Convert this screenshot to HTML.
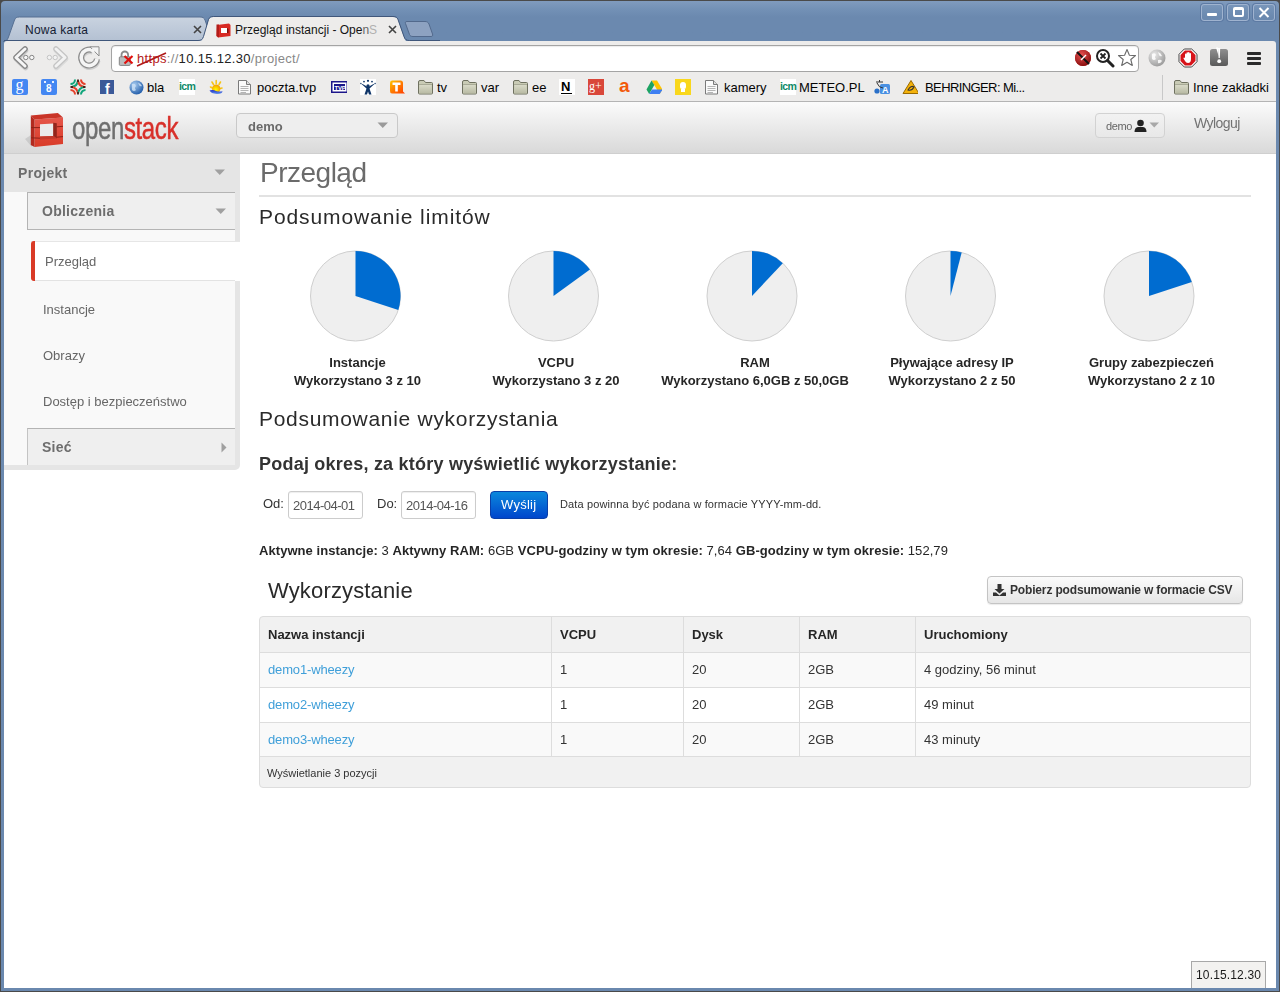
<!DOCTYPE html>
<html><head><meta charset="utf-8">
<style>
*{box-sizing:border-box;margin:0;padding:0}
html,body{width:1280px;height:992px;overflow:hidden;background:#4a4a4a;font-family:"Liberation Sans",sans-serif}
.a{position:absolute}
.t{position:absolute;white-space:nowrap;line-height:1}
#frame{position:absolute;left:1px;top:1px;width:1278px;height:990px;background:linear-gradient(#809bbe 0,#7391b6 8px,#6b89af 16px,#6a88ae 100%);border-radius:4px 4px 0 0}
#toolbar{position:absolute;left:4px;top:41px;width:1272px;height:61px;background:#edeceb;border-radius:3px 3px 0 0}
#page{position:absolute;left:4px;top:102px;width:1272px;height:886px;background:#fff;overflow:hidden}
.wb{position:absolute;top:4px;width:22px;height:17px;border:1px solid #9fb3cf;border-radius:3px;box-shadow:0 0 0 1px #5d7aa3}
.bm{position:absolute;top:79px;width:16px;height:16px}
.bmt{position:absolute;top:81px;font-size:13px;line-height:1;color:#050505;white-space:nowrap}
</style></head><body>
<div id="frame"></div>
<!-- window buttons -->
<div class="wb" style="left:1201px"><div class="a" style="left:5px;top:8px;width:10px;height:3px;background:#fff;border-radius:1px"></div></div>
<div class="wb" style="left:1227px"><div class="a" style="left:5px;top:2px;width:11px;height:10px;border:2px solid #fff;border-top-width:3px;border-radius:2px"></div></div>
<div class="wb" style="left:1253px"><svg class="a" style="left:4px;top:2px" width="12" height="11"><path d="M1.5 1L10.5 10M10.5 1L1.5 10" stroke="#fff" stroke-width="2"/></svg></div>
<!-- inactive tab -->
<svg class="a" style="left:0;top:0" width="440" height="44">
<defs><linearGradient id="gi" x1="0" y1="0" x2="0" y2="1"><stop offset="0" stop-color="#c9d3e0"/><stop offset="1" stop-color="#b3c0d2"/></linearGradient></defs>
<path d="M3 41.5 C6 41.5 7.5 40 8.5 37 L14.5 20 C15.5 17.8 16.5 17 19.5 17 L200 17 C203 17 204 17.8 205 20 L211 37 C212 40 213 41.5 216 41.5 Z" fill="url(#gi)"/>
<path d="M3 41.5 C6 41.5 7.5 40 8.5 37 L14.5 20 C15.5 17.8 16.5 17 19.5 17 L200 17 C203 17 204 17.8 205 20 L211 37 C212 40 213 41.5 216 41.5" fill="none" stroke="#566f92" stroke-width="1"/>
<path d="M407 21.5 L425 21.5 C427 21.5 428 22.2 429 24 L432.5 34 C433 35.5 432.5 36.5 431 36.5 L413 36.5 C411 36.5 410 35.8 409.5 34.5 L405.5 23.5 C405 22.2 405.5 21.5 407 21.5 Z" fill="#8da2c1" stroke="#52698c" stroke-width="1"/>
</svg>
<div class="t" style="left:25px;top:24px;font-size:12px;color:#141c33;letter-spacing:0.25px">Nowa karta</div>
<svg class="a" style="left:193px;top:25px" width="9" height="9"><path d="M1 1L8 8M8 1L1 8" stroke="#444" stroke-width="1.6"/></svg>
<div id="toolbar"></div>
<!-- active tab -->
<svg class="a" style="left:0;top:0" width="440" height="44">
<path d="M198 42 C201 42 202.5 40.5 203.5 37.5 L208.5 20 C209.5 17.8 210.5 17 213.5 17 L393 17 C396 17 397 17.8 398 20 L404 37.5 C405 40.5 406.5 42 409.5 42 Z" fill="#edeceb"/>
<path d="M4 40.5 L198 40.5 C201 40.5 202.5 39.5 203.5 36.5 L208.5 19.5 C209.5 17.3 210.5 16.5 213.5 16.5 L393 16.5 C396 16.5 397 17.3 398 19.5 L404 36.5 C405 39.5 406.5 40.5 409.5 40.5 L1276 40.5" fill="none" stroke="#40577b" stroke-width="1"/>
</svg>
<svg class="a" style="left:215px;top:22px" width="17" height="16"><path d="M2 3 L14 1.5 L15.5 3 L15.5 14 L3 15.5 L1.5 14 Z" fill="#d82a24"/><path d="M1.5 2.5 L4 2.5 L4 15.5 L1.5 14Z" fill="#b21d18"/><rect x="6" y="6" width="6" height="5" fill="#fff"/><path d="M12 6 L13.5 7 L13.5 11 L12 11Z" fill="#7a1410"/></svg>
<div class="t" style="left:235px;top:24px;font-size:12px;color:#141414;letter-spacing:0px">Przegląd instancji - Ope<span style="color:#666">n</span><span style="color:#b0b0b0">S</span></div>
<svg class="a" style="left:388px;top:25px" width="9" height="9"><path d="M1 1L8 8M8 1L1 8" stroke="#444" stroke-width="1.6"/></svg>

<!-- nav buttons -->
<svg class="a" style="left:8px;top:45px" width="30" height="26">
 <path d="M17 4 L8 12.5 L17 21" fill="none" stroke="#c8c8c8" stroke-width="5.5" stroke-linecap="round" stroke-linejoin="round" transform="translate(0.5,1.5)"/>
 <path d="M17 4 L8 12.5 L17 21" fill="none" stroke="#858585" stroke-width="5.5" stroke-linecap="round" stroke-linejoin="round"/>
 <path d="M17 4 L8 12.5 L17 21" fill="none" stroke="#f6f6f6" stroke-width="3" stroke-linecap="round" stroke-linejoin="round"/>
 <circle cx="17.8" cy="12.5" r="2.2" fill="#f6f6f6" stroke="#858585" stroke-width="1"/>
 <circle cx="23.8" cy="12.5" r="2.2" fill="#f6f6f6" stroke="#858585" stroke-width="1"/>
</svg>
<svg class="a" style="left:42px;top:45px" width="30" height="26">
 <path d="M14 4 L23 12.5 L14 21" fill="none" stroke="#dadada" stroke-width="5.5" stroke-linecap="round" stroke-linejoin="round" transform="translate(0.5,1.5)"/>
 <path d="M14 4 L23 12.5 L14 21" fill="none" stroke="#c4c4c4" stroke-width="5.5" stroke-linecap="round" stroke-linejoin="round"/>
 <path d="M14 4 L23 12.5 L14 21" fill="none" stroke="#f2f2f2" stroke-width="3" stroke-linecap="round" stroke-linejoin="round"/>
 <circle cx="7.4" cy="12.5" r="2.2" fill="#f2f2f2" stroke="#c4c4c4" stroke-width="1"/>
 <circle cx="13.2" cy="12.5" r="2.2" fill="#f2f2f2" stroke="#c4c4c4" stroke-width="1"/>
</svg>
<svg class="a" style="left:78px;top:45px" width="24" height="26">
 <path d="M19 14 A8 8 0 1 1 14.5 5.3" fill="none" stroke="#cfcfcf" stroke-width="6" transform="translate(0.5,1.5)"/>
 <path d="M19 14 A8 8 0 1 1 14.5 5.3" fill="none" stroke="#8c8c8c" stroke-width="6"/>
 <path d="M19 14 A8 8 0 1 1 14.5 5.3" fill="none" stroke="#f5f5f5" stroke-width="3.6"/>
 <path d="M12 1.8 L21 1.8 L21 11 Z" fill="#f5f5f5" stroke="#8c8c8c" stroke-width="1" stroke-linejoin="round"/>
 <path d="M13.5 4.5 L16 7" stroke="#f5f5f5" stroke-width="3"/>
</svg>
<!-- omnibox -->
<div class="a" style="left:111px;top:45px;width:1028px;height:27px;background:#fff;border:1px solid #a4a4a4;border-radius:4px;box-shadow:inset 0 1px 1px rgba(0,0,0,.08)"></div>
<svg class="a" style="left:117px;top:50px" width="18" height="18">
 <path d="M4.5 7 V4.8 A3.3 3.3 0 0 1 11.1 4.8 V7" fill="none" stroke="#8a8a8a" stroke-width="1.8"/>
 <rect x="2.3" y="6.8" width="11" height="8.6" rx="1" fill="#bdbdbd" stroke="#858585"/>
 <path d="M7.5 6 L15.5 13.5 M15.5 6 L7.5 13.5" stroke="#e0100d" stroke-width="2.2"/>
</svg>
<div class="t" style="left:137px;top:52px;font-size:13px;color:#555;letter-spacing:0.32px"><span style="color:#b51a1a">https</span><span style="color:#888">://</span><span style="color:#222">10.15.12.30</span><span style="color:#888">/project/</span></div>
<svg class="a" style="left:135px;top:50px" width="34" height="18"><path d="M2 16 L31 3" stroke="#b01818" stroke-width="1.6"/></svg>
<!-- omnibox right icons -->
<svg class="a" style="left:1074px;top:49px" width="18" height="18"><circle cx="9" cy="9" r="8" fill="#b51c1c"/><circle cx="9" cy="9" r="8" fill="url(#rg)"/><path d="M3 3 L15 15" stroke="#111" stroke-width="2"/><path d="M7 11 L12 6" stroke="#fff" stroke-width="1.4"/>
<defs><radialGradient id="rg" cx="0.4" cy="0.3" r="0.7"><stop offset="0" stop-color="#e85050"/><stop offset="1" stop-color="#8a0f0f"/></radialGradient></defs></svg>
<svg class="a" style="left:1095px;top:48px" width="20" height="20"><circle cx="8" cy="8" r="6" fill="#fff" stroke="#222" stroke-width="2"/><path d="M12.5 12.5 L18 18" stroke="#222" stroke-width="3" stroke-linecap="round"/><path d="M5.5 5.5 L10.5 10.5 M10.5 5.5 L5.5 10.5" stroke="#222" stroke-width="1.8"/></svg>
<svg class="a" style="left:1117px;top:48px" width="20" height="20"><path d="M10 1.5 L12.4 7.2 L18.5 7.6 L13.8 11.5 L15.3 17.5 L10 14.2 L4.7 17.5 L6.2 11.5 L1.5 7.6 L7.6 7.2 Z" fill="#fff" stroke="#6a6a6a" stroke-width="1.1" stroke-linejoin="round"/></svg>
<!-- extension icons -->
<svg class="a" style="left:1147px;top:48px" width="20" height="20"><circle cx="10" cy="10" r="8.5" fill="url(#gg)"/><path d="M5 6 Q8 4 9 7 Q7 9 9 11 Q7 13 5 11 Z M11 4 Q14 5 15 8 Q13 9 12 7Z M11 12 Q14 11 15 13 Q13 16 11 15Z" fill="#fff" opacity=".85"/>
<defs><radialGradient id="gg" cx="0.35" cy="0.3" r="0.75"><stop offset="0" stop-color="#e8e8e8"/><stop offset="1" stop-color="#9a9a9a"/></radialGradient></defs></svg>
<svg class="a" style="left:1178px;top:48px" width="20" height="20"><path d="M6.3 1 H13.7 L19 6.3 V13.7 L13.7 19 H6.3 L1 13.7 V6.3 Z" fill="#fff" stroke="#444" stroke-width="1"/><path d="M6.9 2.5 H13.1 L17.5 6.9 V13.1 L13.1 17.5 H6.9 L2.5 13.1 V6.9 Z" fill="#d7141a"/><path d="M7 9 V6.5 Q7 5.6 7.8 5.6 Q8.5 5.6 8.5 6.5 V5 Q8.5 4.2 9.3 4.2 Q10 4.2 10 5 V4.7 Q10 4 10.8 4 Q11.5 4 11.5 4.8 V5.5 Q11.5 4.9 12.2 4.9 Q13 4.9 13 5.7 V11 Q13 15 10 15 Q8 15 7 13 L5.5 10.5 Q5.2 9.6 6 9.4 Q6.6 9.3 7 10Z" fill="#fff"/></svg>
<svg class="a" style="left:1209px;top:47px" width="20" height="20"><rect x="1" y="2" width="18" height="17" rx="2.5" fill="url(#eg)"/><path d="M9 1 L11.2 1 L10.8 11 L9.6 11Z" fill="#fff"/><circle cx="10.2" cy="14.2" r="1.9" fill="#fff"/><path d="M7 0.5 L9 0.5 L9.6 9Z" fill="#fff"/>
<defs><linearGradient id="eg" x1="0" y1="0" x2="0" y2="1"><stop offset="0" stop-color="#8f8f8f"/><stop offset="1" stop-color="#5a5a5a"/></linearGradient></defs></svg>
<div class="a" style="left:1247px;top:52px;width:14px;height:3px;background:#2a2a2a;border-radius:1px"></div>
<div class="a" style="left:1247px;top:57px;width:14px;height:3px;background:#2a2a2a;border-radius:1px"></div>
<div class="a" style="left:1247px;top:62px;width:14px;height:3px;background:#2a2a2a;border-radius:1px"></div>

<!-- bookmarks -->
<div class="a" style="left:4px;top:101px;width:1272px;height:1px;background:#b4b4b4"></div>
<div class="bm" style="left:12px;background:#4487f2;border-radius:2px;overflow:hidden"><div class="t" style="left:3.5px;top:-2.5px;font-size:16px;font-family:'Liberation Serif';color:#fff">g</div></div>
<div class="bm" style="left:41px;background:#4487f2;border-radius:2px"><div class="a" style="left:3px;top:2px;width:2px;height:2px;background:#e8f0ff"></div><div class="a" style="left:11px;top:2px;width:2px;height:2px;background:#e8f0ff"></div><div class="t" style="left:5px;top:5px;font-size:10px;font-weight:bold;color:#fff">8</div></div>
<svg class="bm" style="left:70px" width="16" height="16">
<path d="M0.5 5 A4.5 4.5 0 0 0 5 0.5 M1.5 8 A7.5 7.5 0 0 0 8 1.5" fill="none" stroke="#0fa57a" stroke-width="2"/>
<path d="M11 0.5 A4.5 4.5 0 0 0 15.5 5 M8 1.5 A7.5 7.5 0 0 0 14.5 8" fill="none" stroke="#e5402a" stroke-width="2"/>
<path d="M0.5 11 A4.5 4.5 0 0 1 5 15.5 M1.5 8 A7.5 7.5 0 0 1 8 14.5" fill="none" stroke="#e5402a" stroke-width="2"/>
<path d="M11 15.5 A4.5 4.5 0 0 1 15.5 11 M8 14.5 A7.5 7.5 0 0 1 14.5 8" fill="none" stroke="#0fa57a" stroke-width="2"/>
<path d="M8 0.5 V3 M8 13 V15.5 M0.5 8 H3 M13 8 H15.5" stroke="#45221a" stroke-width="1.8"/>
</svg>
<div class="bm" style="left:100px;top:80px;width:14px;height:14px;background:#3b5998"><div class="t" style="left:5px;top:2px;font-size:14px;font-weight:bold;color:#fff">f</div></div>
<svg class="bm" style="left:129px;top:80px" width="15" height="15"><circle cx="7.5" cy="7.5" r="7" fill="url(#glb)"/><path d="M3 4 Q6 3 7 6 Q5 8 7 10 Q5 12 3 10Z M9 2.5 Q12 3.5 13 6 Q11 7 10 5Z" fill="#cfe3f7" opacity=".8"/><defs><radialGradient id="glb" cx="0.35" cy="0.3" r="0.75"><stop offset="0" stop-color="#a9cdf0"/><stop offset="1" stop-color="#1e5aa8"/></radialGradient></defs></svg>
<div class="bmt" style="left:147px">bla</div>
<div class="bm" style="left:179px;background:#fff"><div class="t" style="left:0px;top:2px;font-size:10.5px;font-weight:bold;color:#0e8a68;letter-spacing:-0.6px">icm</div></div>
<svg class="bm" style="left:208px" width="16" height="16">
<defs><radialGradient id="sun" cx="0.45" cy="0.6" r="0.6"><stop offset="0" stop-color="#ffff00"/><stop offset="1" stop-color="#f39a00"/></radialGradient>
<linearGradient id="wav" x1="0" y1="0" x2="0" y2="1"><stop offset="0" stop-color="#1a2fd0"/><stop offset="1" stop-color="#6a9ae8"/></linearGradient></defs>
<path d="M4 3 L5.5 5.5 M8.2 1.5 L8.2 4.5 M12.5 3 L11 5.5 M2.5 8 L4 8.8 M14 9 L12.5 9.5" stroke="#f5c518" stroke-width="1.6" stroke-linecap="round"/>
<circle cx="8.2" cy="9.8" r="4.2" fill="url(#sun)"/>
<path d="M1.5 11.5 Q5 10.5 8 12 Q11 13 14.5 12.3 Q14 15.5 8.5 15 Q3 14.5 1.5 11.5Z" fill="url(#wav)"/>
</svg>
<svg class="bm" style="left:237px" width="15" height="16"><path d="M1.5 1.5 L9.5 1.5 L13.5 5.5 L13.5 15 L1.5 15 Z" fill="#fafafa" stroke="#7a7a7a" stroke-width="1" stroke-linejoin="round"/><path d="M9.5 1.5 L9.5 5.5 L13.5 5.5" fill="#ddd" stroke="#7a7a7a" stroke-width="1"/><path d="M3.5 7.5 H11.5 M3.5 9.5 H11.5 M3.5 11.5 H11.5 M3.5 13.5 H9" stroke="#b4b4b4" stroke-width="1"/></svg>
<div class="bmt" style="left:257px">poczta.tvp</div>
<svg class="bm" style="left:331px;top:81px" width="17" height="12"><rect x="0.75" y="0.75" width="15.5" height="10.5" fill="#fff" stroke="#1c168a" stroke-width="1.5"/><rect x="3" y="3" width="11" height="6" fill="#1c168a"/><text x="3.6" y="8.5" font-size="6" font-weight="bold" fill="#fff" font-family="Liberation Sans" letter-spacing="-0.2">TVP</text></svg>
<svg class="bm" style="left:360px" width="16" height="16"><rect width="16" height="16" fill="#fff"/><circle cx="8" cy="1.8" r="1.1" fill="#0f3568"/><circle cx="4" cy="2.6" r="0.9" fill="#0f3568"/><circle cx="12" cy="2.6" r="0.9" fill="#0f3568"/><circle cx="0.9" cy="4.5" r="0.7" fill="#0f3568"/><circle cx="15.1" cy="4.5" r="0.7" fill="#0f3568"/><path d="M1.5 5 L6.5 9.5 L4.5 15.5 L7 15.5 L8 12.5 L9 15.5 L11.5 15.5 L9.5 9.5 L14.5 5 L13.5 5 L9 7.5 L7 7.5 L2.5 5Z" fill="#0f3568"/><circle cx="8" cy="6.8" r="1.6" fill="#0f3568"/></svg>
<svg class="bm" style="left:389px" width="17" height="16"><defs><linearGradient id="tg" x1="0" y1="0" x2="1" y2="1"><stop offset="0" stop-color="#ffc800"/><stop offset="0.5" stop-color="#ff7a00"/><stop offset="1" stop-color="#ff3a00"/></linearGradient></defs><path d="M3 1.5 L11.5 1.5 Q14 1.5 14 4 L14 12.5 L16 14.5 L3 14.5 Q1 14.5 1 12 L1 4 Q1 1.5 3 1.5Z" fill="url(#tg)"/><path d="M3.5 3.5 H11.5 V6 H8.8 V12.5 H6.2 V6 H3.5Z" fill="#fff"/></svg>
<svg class="bm" style="left:417px" width="17" height="16"><path d="M1.5 3 Q1.5 1.5 3 1.5 L7 1.5 L8.5 3.5 L14.5 3.5 Q15.5 3.5 15.5 4.5 L15.5 14 Q15.5 15 14.5 15 L2.5 15 Q1.5 15 1.5 14 Z" fill="#c9cbb5" stroke="#6f7160" stroke-width="1"/><path d="M2 5.5 L15 5.5" stroke="#a9ab97"/><rect x="2.5" y="6" width="12" height="8.5" fill="url(#fg)"/><defs><linearGradient id="fg" x1="0" y1="0" x2="0" y2="1"><stop offset="0" stop-color="#d9dac8"/><stop offset="1" stop-color="#b8baa3"/></linearGradient></defs></svg>
<div class="bmt" style="left:437px">tv</div>
<svg class="bm" style="left:461px" width="17" height="16"><path d="M1.5 3 Q1.5 1.5 3 1.5 L7 1.5 L8.5 3.5 L14.5 3.5 Q15.5 3.5 15.5 4.5 L15.5 14 Q15.5 15 14.5 15 L2.5 15 Q1.5 15 1.5 14 Z" fill="#c9cbb5" stroke="#6f7160" stroke-width="1"/><path d="M2 5.5 L15 5.5" stroke="#a9ab97"/><rect x="2.5" y="6" width="12" height="8.5" fill="url(#fg)"/><defs><linearGradient id="fg" x1="0" y1="0" x2="0" y2="1"><stop offset="0" stop-color="#d9dac8"/><stop offset="1" stop-color="#b8baa3"/></linearGradient></defs></svg>
<div class="bmt" style="left:481px">var</div>
<svg class="bm" style="left:512px" width="17" height="16"><path d="M1.5 3 Q1.5 1.5 3 1.5 L7 1.5 L8.5 3.5 L14.5 3.5 Q15.5 3.5 15.5 4.5 L15.5 14 Q15.5 15 14.5 15 L2.5 15 Q1.5 15 1.5 14 Z" fill="#c9cbb5" stroke="#6f7160" stroke-width="1"/><path d="M2 5.5 L15 5.5" stroke="#a9ab97"/><rect x="2.5" y="6" width="12" height="8.5" fill="url(#fg)"/><defs><linearGradient id="fg" x1="0" y1="0" x2="0" y2="1"><stop offset="0" stop-color="#d9dac8"/><stop offset="1" stop-color="#b8baa3"/></linearGradient></defs></svg>
<div class="bmt" style="left:532px">ee</div>
<div class="bm" style="left:559px;background:#fff"><div class="t" style="left:2px;top:1px;font-size:13px;font-weight:bold;color:#000">N</div><div class="a" style="left:2px;top:14px;width:11px;height:1px;background:#000"></div></div>
<div class="bm" style="left:588px;background:#d9473a"><div class="t" style="left:1px;top:1px;font-size:12px;color:#fff;font-family:'Liberation Serif'">g+</div></div>
<div class="t" style="left:619px;top:76px;font-size:19px;font-weight:bold;color:#f25a0a">a</div>
<svg class="bm" style="left:646px" width="17" height="16"><path d="M5.5 1.5 L11 1.5 L16.5 10.5 L13.7 15 Z" fill="#ffc400"/><path d="M5.5 1.5 L0.5 10.5 L3.2 15 L8.3 6Z" fill="#1da362"/><path d="M3.2 15 L13.7 15 L16.5 10.5 L6 10.5Z" fill="#3f7ff2"/></svg>
<div class="bm" style="left:675px;background:#f9d71c"><div class="a" style="left:5px;top:3px;width:6px;height:7px;background:#fff;border-radius:3px 3px 2px 2px"></div><div class="a" style="left:6px;top:10px;width:4px;height:3px;background:#fff"></div></div>
<svg class="bm" style="left:704px" width="15" height="16"><path d="M1.5 1.5 L9.5 1.5 L13.5 5.5 L13.5 15 L1.5 15 Z" fill="#fafafa" stroke="#7a7a7a" stroke-width="1" stroke-linejoin="round"/><path d="M9.5 1.5 L9.5 5.5 L13.5 5.5" fill="#ddd" stroke="#7a7a7a" stroke-width="1"/><path d="M3.5 7.5 H11.5 M3.5 9.5 H11.5 M3.5 11.5 H11.5 M3.5 13.5 H9" stroke="#b4b4b4" stroke-width="1"/></svg>
<div class="bmt" style="left:724px">kamery</div>
<div class="bm" style="left:780px;background:#fff"><div class="t" style="left:0px;top:2px;font-size:10.5px;font-weight:bold;color:#0e8a68;letter-spacing:-0.6px">icm</div></div>
<div class="bmt" style="left:799px">METEO.PL</div>
<svg class="bm" style="left:874px" width="17" height="16"><rect x="6" y="5" width="10" height="10" rx="1.5" fill="#4a90e2"/><text x="8" y="14" font-size="9" font-weight="bold" fill="#fff" font-family="Liberation Sans">A</text><path d="M2 3 H9 M5.5 1 V3 M3 4 Q5 9 9 9" stroke="#333" stroke-width="1" fill="none"/><circle cx="3" cy="12" r="2.6" fill="#2a70c8"/></svg>
<svg class="bm" style="left:902px" width="18" height="16"><path d="M9 1.5 L17 14.5 L1 14.5Z" fill="#f4b20a" stroke="#9a6a00" stroke-width="1" stroke-linejoin="round"/><path d="M6 11 Q9 6 12 8 Q10 12 6 11Z" fill="none" stroke="#333" stroke-width="1.1"/></svg>
<div class="bmt" style="left:925px;letter-spacing:-0.6px">BEHRINGER: Mi...</div>
<div class="a" style="left:1162px;top:75px;width:1px;height:25px;background:#c8c8c8"></div>
<svg class="bm" style="left:1173px" width="17" height="16"><path d="M1.5 3 Q1.5 1.5 3 1.5 L7 1.5 L8.5 3.5 L14.5 3.5 Q15.5 3.5 15.5 4.5 L15.5 14 Q15.5 15 14.5 15 L2.5 15 Q1.5 15 1.5 14 Z" fill="#c9cbb5" stroke="#6f7160" stroke-width="1"/><path d="M2 5.5 L15 5.5" stroke="#a9ab97"/><rect x="2.5" y="6" width="12" height="8.5" fill="url(#fg)"/><defs><linearGradient id="fg" x1="0" y1="0" x2="0" y2="1"><stop offset="0" stop-color="#d9dac8"/><stop offset="1" stop-color="#b8baa3"/></linearGradient></defs></svg>
<div class="bmt" style="left:1193px">Inne zakładki</div>

<div style="position:absolute;left:0;top:0;width:1280px;height:992px;will-change:transform">
<!-- PAGE -->
<div class="a" style="left:4px;top:102px;width:1272px;height:886px;background:#fff"></div>
<div class="a" style="left:4px;top:102px;width:1272px;height:51px;background:linear-gradient(#fbfbfb,#d9d9d9)"></div>
<div class="a" style="left:4px;top:153px;width:1272px;height:1px;background:#cfcfcf"></div>
<!-- logo -->
<svg class="a" style="left:24px;top:108px" width="46" height="42">
 <defs><linearGradient id="lf" x1="0" y1="0" x2="0" y2="1"><stop offset="0" stop-color="#e5564a"/><stop offset="1" stop-color="#d93b28"/></linearGradient></defs>
 <path d="M1 31 L7 27 L8 39 Z" fill="#888" opacity=".25"/>
 <path d="M10.5 11.5 L39 9.5 L39 36 L10.5 39 Z" fill="url(#lf)"/>
 <path d="M6.8 7.6 L33.9 5.1 L39 9.5 L10.5 11.5 Z" fill="#c93427"/>
 <path d="M6.8 7.6 L10.5 11.5 L10.5 39 L6.8 37 Z" fill="#b32a1f"/>
 <path d="M16 16.2 L29.7 15.6 L29.7 28 L16 28.6 Z" fill="#ebebeb"/>
 <path d="M29.2 14.8 L32.8 15.2 L32.8 30.5 L29.2 28 Z" fill="#93251b"/>
 <path d="M16 28.6 L29.7 28 L32.8 30.5 L16 31.5 Z" fill="#c33a2c"/>
 <path d="M7 19.6 L16 19.6 M32.8 18.8 L39 18.3 M7 29.8 L16 30.2 M32.8 29.2 L39 28.6" stroke="#8e2016" stroke-width="1"/>
</svg>
<div class="t" style="left:72px;top:112px;font-size:32px;color:#6f6f6f;transform:scaleX(0.75);transform-origin:0 0;letter-spacing:-0.5px;-webkit-text-stroke:0.5px #6f6f6f">open<span style="color:#d8302a;-webkit-text-stroke:0.5px #d8302a">stack</span></div>
<!-- project dropdown -->
<div class="a" style="left:236px;top:113px;width:162px;height:25px;background:#eeeeee;border:1px solid #c9c9c9;border-radius:4px"></div>
<div class="t" style="left:248px;top:120px;font-size:13px;font-weight:bold;color:#6a6a6a">demo</div>
<svg class="a" style="left:377px;top:122px" width="12" height="7"><path d="M0.5 0.5 L11 0.5 L5.75 6Z" fill="#9a9a9a"/></svg>
<!-- user -->
<div class="a" style="left:1095px;top:113px;width:70px;height:25px;background:linear-gradient(#f2f2f2,#e8e8e8);border:1px solid #d2d2d2;border-radius:4px"></div>
<div class="t" style="left:1106px;top:121px;font-size:11px;color:#666;letter-spacing:-0.4px">demo</div>
<svg class="a" style="left:1134px;top:119px" width="14" height="14"><circle cx="6.5" cy="4" r="3.3" fill="#222"/><path d="M0.5 13 Q0.5 8.5 4 8 L9 8 Q12.5 8.5 12.5 13Z" fill="#222"/></svg>
<svg class="a" style="left:1149px;top:122px" width="11" height="7"><path d="M0.5 0.5 L10 0.5 L5.25 5.5Z" fill="#a8a8a8"/></svg>
<div class="t" style="left:1194px;top:116px;font-size:14px;color:#727272;letter-spacing:-0.55px">Wyloguj</div>

<!-- SIDEBAR -->
<div class="a" style="left:4px;top:154px;width:236px;height:316px;background:#e5e5e5;border-radius:0 0 5px 0"></div>
<div class="a" style="left:4px;top:192px;width:231px;height:273px;background:#f9f9f9"></div>
<div class="t" style="left:18px;top:166px;font-size:14px;font-weight:bold;color:#6d6d6d;letter-spacing:0.3px">Projekt</div>
<svg class="a" style="left:214px;top:169px" width="12" height="7"><path d="M0.5 0.5 L11 0.5 L5.75 6Z" fill="#a0a0a0"/></svg>
<div class="a" style="left:27px;top:192px;width:208px;height:38px;background:#efefef;border:1px solid #b4b4b4;border-right:none"></div>
<div class="t" style="left:42px;top:204px;font-size:14px;font-weight:bold;color:#6d6d6d;letter-spacing:0.25px">Obliczenia</div>
<svg class="a" style="left:215px;top:208px" width="12" height="7"><path d="M0.5 0.5 L11 0.5 L5.75 6Z" fill="#a0a0a0"/></svg>
<div class="a" style="left:31px;top:241px;width:209px;height:40px;background:#fff;border-top:1px solid #e6e6e6"></div>
<div class="a" style="left:31px;top:241px;width:4px;height:40px;background:#d93a26;border-radius:3px 0 0 3px"></div>
<div class="t" style="left:45px;top:255px;font-size:13px;color:#666">Przegląd</div>
<div class="a" style="left:35px;top:280px;width:200px;height:1px;background:#e3e3e3"></div>
<div class="t" style="left:43px;top:303px;font-size:13px;color:#666">Instancje</div>
<div class="t" style="left:43px;top:349px;font-size:13px;color:#666">Obrazy</div>
<div class="t" style="left:43px;top:395px;font-size:13px;color:#666">Dostęp i bezpieczeństwo</div>
<div class="a" style="left:27px;top:428px;width:208px;height:37px;background:#efefef;border-top:1px solid #b4b4b4;border-left:1px solid #c4c4c4"></div>
<div class="t" style="left:42px;top:440px;font-size:14px;font-weight:bold;color:#6d6d6d;letter-spacing:0.25px">Sieć</div>
<svg class="a" style="left:221px;top:442px" width="6" height="11"><path d="M0.5 0.5 L5.5 5.5 L0.5 10.5Z" fill="#a0a0a0"/></svg>

<!-- MAIN -->
<div class="t" style="left:260px;top:159px;font-size:28px;color:#6b6b6b;letter-spacing:-0.5px">Przegląd</div>
<div class="a" style="left:259px;top:195px;width:992px;height:2px;background:#e2e2e2"></div>
<div class="t" style="left:259px;top:206px;font-size:21px;color:#2a2a2a;letter-spacing:0.9px">Podsumowanie limitów</div>
<svg class="a" style="left:0;top:0" width="1280" height="400"><circle cx="355.5" cy="296" r="45" fill="#efefef" stroke="#cfcfcf" stroke-width="1"/><path d="M355.5 296 L355.5 251 A45 45 0 0 1 398.30 309.91 Z" fill="#006cd0"/><circle cx="553.5" cy="296" r="45" fill="#efefef" stroke="#cfcfcf" stroke-width="1"/><path d="M553.5 296 L553.5 251 A45 45 0 0 1 589.91 269.55 Z" fill="#006cd0"/><circle cx="752" cy="296" r="45" fill="#efefef" stroke="#cfcfcf" stroke-width="1"/><path d="M752 296 L752 251 A45 45 0 0 1 782.80 263.20 Z" fill="#006cd0"/><circle cx="950.5" cy="296" r="45" fill="#efefef" stroke="#cfcfcf" stroke-width="1"/><path d="M950.5 296 L950.5 251 A45 45 0 0 1 961.69 252.41 Z" fill="#006cd0"/><circle cx="1149" cy="296" r="45" fill="#efefef" stroke="#cfcfcf" stroke-width="1"/><path d="M1149 296 L1149 251 A45 45 0 0 1 1191.80 282.09 Z" fill="#006cd0"/></svg>
<div class="t" style="left:207.5px;width:300px;text-align:center;top:356px;font-size:13px;font-weight:bold;color:#262626">Instancje</div><div class="t" style="left:207.5px;width:300px;text-align:center;top:374px;font-size:13px;font-weight:bold;color:#262626">Wykorzystano 3 z 10</div><div class="t" style="left:406px;width:300px;text-align:center;top:356px;font-size:13px;font-weight:bold;color:#262626">VCPU</div><div class="t" style="left:406px;width:300px;text-align:center;top:374px;font-size:13px;font-weight:bold;color:#262626">Wykorzystano 3 z 20</div><div class="t" style="left:605px;width:300px;text-align:center;top:356px;font-size:13px;font-weight:bold;color:#262626">RAM</div><div class="t" style="left:605px;width:300px;text-align:center;top:374px;font-size:13px;font-weight:bold;color:#262626">Wykorzystano 6,0GB z 50,0GB</div><div class="t" style="left:802px;width:300px;text-align:center;top:356px;font-size:13px;font-weight:bold;color:#262626">Pływające adresy IP</div><div class="t" style="left:802px;width:300px;text-align:center;top:374px;font-size:13px;font-weight:bold;color:#262626">Wykorzystano 2 z 50</div><div class="t" style="left:1001.5px;width:300px;text-align:center;top:356px;font-size:13px;font-weight:bold;color:#262626">Grupy zabezpieczeń</div><div class="t" style="left:1001.5px;width:300px;text-align:center;top:374px;font-size:13px;font-weight:bold;color:#262626">Wykorzystano 2 z 10</div>
<div class="t" style="left:259px;top:408px;font-size:21px;color:#2a2a2a;letter-spacing:0.7px">Podsumowanie wykorzystania</div>
<div class="t" style="left:259px;top:455px;font-size:18px;font-weight:bold;color:#333;letter-spacing:0.22px">Podaj okres, za który wyświetlić wykorzystanie:</div>
<div class="t" style="left:263px;top:497px;font-size:13px;color:#333">Od:</div>
<div class="a" style="left:288px;top:491px;width:75px;height:28px;background:#fff;border:1px solid #cccccc;border-radius:3px;box-shadow:inset 0 1px 1px rgba(0,0,0,.07)"></div>
<div class="t" style="left:293px;top:499px;font-size:13px;color:#555;letter-spacing:-0.5px">2014-04-01</div>
<div class="t" style="left:377px;top:497px;font-size:13px;color:#333">Do:</div>
<div class="a" style="left:401px;top:491px;width:75px;height:28px;background:#fff;border:1px solid #cccccc;border-radius:3px;box-shadow:inset 0 1px 1px rgba(0,0,0,.07)"></div>
<div class="t" style="left:406px;top:499px;font-size:13px;color:#555;letter-spacing:-0.5px">2014-04-16</div>
<div class="a" style="left:490px;top:491px;width:58px;height:28px;background:linear-gradient(#0b88dc,#0046cc);border:1px solid #0a3fa8;border-radius:4px"></div>
<div class="t" style="left:501px;top:498px;font-size:13px;color:#fff;letter-spacing:0.25px">Wyślij</div>
<div class="t" style="left:560px;top:499px;font-size:11px;color:#333;letter-spacing:0.13px">Data powinna być podana w formacie YYYY-mm-dd.</div>
<div class="t" style="left:259px;top:544px;font-size:13px;color:#262626;letter-spacing:0.06px"><b>Aktywne instancje:</b> 3 <b>Aktywny RAM:</b> 6GB <b>VCPU-godziny w tym okresie:</b> 7,64 <b>GB-godziny w tym okresie:</b> 152,79</div>
<div class="t" style="left:268px;top:580px;font-size:22px;color:#2a2a2a;letter-spacing:0.15px">Wykorzystanie</div>
<div class="a" style="left:987px;top:576px;width:256px;height:28px;background:linear-gradient(#fbfbfb,#e6e6e6);border:1px solid #c4c4c4;border-radius:4px;box-shadow:0 1px 1px rgba(0,0,0,.08)"></div>
<svg class="a" style="left:993px;top:584px" width="13" height="12"><path d="M4.5 0 H8.5 V5 H11.5 L6.5 9.5 L1.5 5 H4.5Z" fill="#333"/><path d="M0 8.5 H3 L6.5 11.5 L10 8.5 H13 V12 H0Z" fill="#333"/></svg>
<div class="t" style="left:1010px;top:584px;font-size:12px;font-weight:bold;color:#333;letter-spacing:-0.16px">Pobierz podsumowanie w formacie CSV</div>
<!-- table -->
<div class="a" style="left:259px;top:616px;width:992px;height:172px;border:1px solid #dddddd;border-radius:4px;background:#f1f1f1;overflow:hidden">
 <div class="a" style="left:0;top:35px;width:990px;height:35px;background:#f9f9f9;border-top:1px solid #dddddd"></div>
 <div class="a" style="left:0;top:70px;width:990px;height:35px;background:#fff;border-top:1px solid #dddddd"></div>
 <div class="a" style="left:0;top:105px;width:990px;height:35px;background:#f9f9f9;border-top:1px solid #dddddd;border-bottom:1px solid #dddddd"></div>
 <div class="a" style="left:291px;top:0;width:1px;height:140px;background:#dddddd"></div>
 <div class="a" style="left:423px;top:0;width:1px;height:140px;background:#dddddd"></div>
 <div class="a" style="left:539px;top:0;width:1px;height:140px;background:#dddddd"></div>
 <div class="a" style="left:655px;top:0;width:1px;height:140px;background:#dddddd"></div>
</div>
<div class="t" style="left:268px;top:628px;font-size:13px;font-weight:bold;color:#262626">Nazwa instancji</div><div class="t" style="left:560px;top:628px;font-size:13px;font-weight:bold;color:#262626">VCPU</div><div class="t" style="left:692px;top:628px;font-size:13px;font-weight:bold;color:#262626">Dysk</div><div class="t" style="left:808px;top:628px;font-size:13px;font-weight:bold;color:#262626">RAM</div><div class="t" style="left:924px;top:628px;font-size:13px;font-weight:bold;color:#262626">Uruchomiony</div><div class="t" style="left:268px;top:663px;font-size:13px;color:#3f9fd9;letter-spacing:-0.15px">demo1-wheezy</div><div class="t" style="left:560px;top:663px;font-size:13px;color:#333">1</div><div class="t" style="left:692px;top:663px;font-size:13px;color:#333">20</div><div class="t" style="left:808px;top:663px;font-size:13px;color:#333">2GB</div><div class="t" style="left:924px;top:663px;font-size:13px;color:#333">4 godziny, 56 minut</div><div class="t" style="left:268px;top:698px;font-size:13px;color:#3f9fd9;letter-spacing:-0.15px">demo2-wheezy</div><div class="t" style="left:560px;top:698px;font-size:13px;color:#333">1</div><div class="t" style="left:692px;top:698px;font-size:13px;color:#333">20</div><div class="t" style="left:808px;top:698px;font-size:13px;color:#333">2GB</div><div class="t" style="left:924px;top:698px;font-size:13px;color:#333">49 minut</div><div class="t" style="left:268px;top:733px;font-size:13px;color:#3f9fd9;letter-spacing:-0.15px">demo3-wheezy</div><div class="t" style="left:560px;top:733px;font-size:13px;color:#333">1</div><div class="t" style="left:692px;top:733px;font-size:13px;color:#333">20</div><div class="t" style="left:808px;top:733px;font-size:13px;color:#333">2GB</div><div class="t" style="left:924px;top:733px;font-size:13px;color:#333">43 minuty</div><div class="t" style="left:267px;top:768px;font-size:11px;color:#333">Wyświetlanie 3 pozycji</div><div class="a" style="left:1191px;top:961px;width:75px;height:27px;background:#f3f2f0;border:1px solid #a8a8a8;border-bottom:none"></div><div class="t" style="left:1196px;top:969px;font-size:12px;color:#1a1a1a;letter-spacing:0.15px">10.15.12.30</div></div>
</body></html>
